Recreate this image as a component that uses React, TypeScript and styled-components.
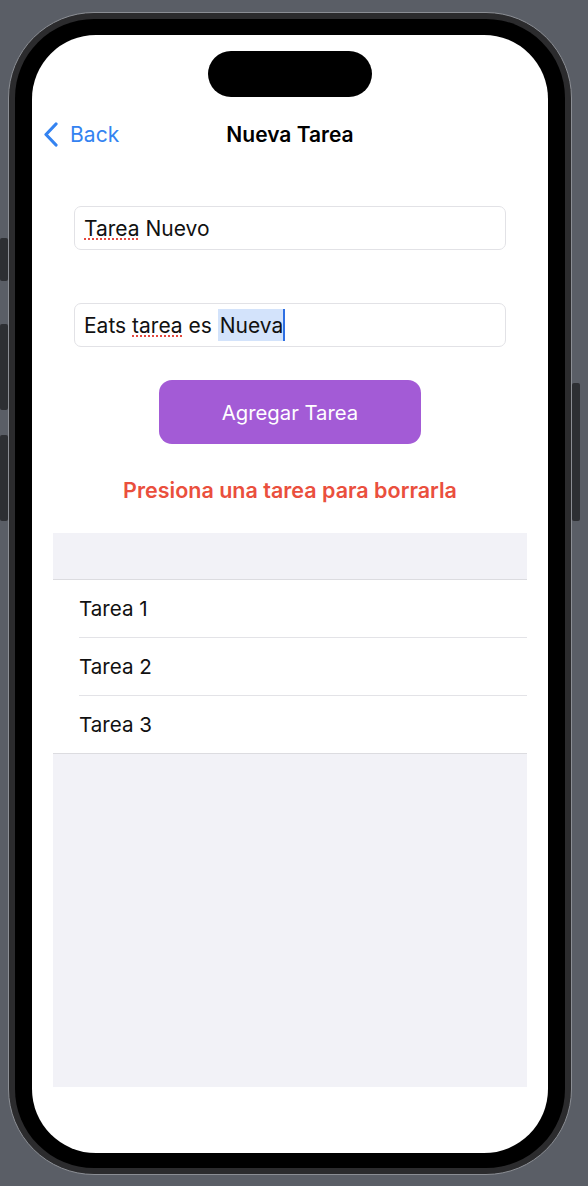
import React from "react";
import styled, { createGlobalStyle } from "styled-components";

const Global = createGlobalStyle`
  html, body { margin: 0; padding: 0; }
  body {
    background: #5a5e66;
    font-family: "Inter", "Noto Sans", sans-serif;
    -webkit-font-smoothing: antialiased;
  }
`;

const Stage = styled.div`
  width: 588px;
  height: 1186px;
  padding: 12px 0 0 8px;
  box-sizing: border-box;
`;

const Phone = styled.div`
  position: relative;
  width: 564px;
  box-sizing: border-box;
  border: 1px solid #8b8e94;
  border-radius: 86px;
  background: #2b2b2d;
  padding: 6px;
`;

const Bezel = styled.div`
  background: #000;
  border-radius: 79px;
  padding: 16px 17px 15px 17px;
`;

const SideButton = styled.div<{ $side: "left" | "right"; $top: number; $h: number }>`
  position: absolute;
  ${(p) => (p.$side === "left" ? "left: -9px;" : "right: -9px;")}
  top: ${(p) => p.$top}px;
  width: 8px;
  height: ${(p) => p.$h}px;
  background: #2d2f33;
  border-radius: 2px;
`;

const Screen = styled.div`
  background: #fff;
  height: 1118px;
  border-radius: 64px;
  overflow: hidden;
  display: flex;
  flex-direction: column;
  align-items: center;
  padding-top: 16px;
  box-sizing: border-box;
`;

const Island = styled.div`
  width: 164px;
  height: 46px;
  border-radius: 23px;
  background: #000;
  flex-shrink: 0;
`;

const NavBar = styled.div`
  margin-top: 15px;
  width: 100%;
  height: 44px;
  display: grid;
  grid-template-columns: 1fr auto 1fr;
  align-items: center;
`;

const BackButton = styled.div`
  display: flex;
  align-items: center;
  gap: 11px;
  padding-left: 11px;
  color: #3483f1;
  font-size: 21px;
  font-weight: 400;
  letter-spacing: 0.1px;
`;

const Title = styled.div`
  font-size: 21px;
  font-weight: 600;
  color: #000;
`;

const Form = styled.div`
  margin-top: 50px;
  width: 432px;
  display: flex;
  flex-direction: column;
`;

const Field = styled.div<{ $gap?: number }>`
  height: 44px;
  box-sizing: border-box;
  margin-top: ${(p) => p.$gap ?? 0}px;
  border: 1px solid #e2e2e6;
  border-radius: 7px;
  padding: 0 9px;
  display: flex;
  align-items: center;
  font-size: 21px;
  color: #111;
  white-space: pre;
`;

const Misspelled = styled.span`
  text-decoration: underline dotted #e5493f;
  text-decoration-thickness: 2px;
  text-underline-offset: 3px;
`;

const Selected = styled.span`
  background: #d3e3fb;
  height: 32px;
  display: inline-flex;
  align-items: center;
  padding-left: 2px;
`;

const Caret = styled.span`
  display: inline-block;
  width: 2px;
  height: 32px;
  background: #2e6fe3;
`;

const AddButton = styled.button`
  margin-top: 33px;
  width: 262px;
  height: 64px;
  border: none;
  border-radius: 13px;
  background: #a35bd6;
  color: #fff;
  font-family: inherit;
  font-size: 20.3px;
  font-weight: 400;
`;

const Hint = styled.div`
  margin-top: 34px;
  line-height: 24px;
  font-size: 21.5px;
  font-weight: 600;
  color: #ea4f3d;
`;

const List = styled.div`
  margin-top: 31px;
  width: 474px;
  height: 554px;
  background: #f2f2f7;
  display: flex;
  flex-direction: column;
`;

const ListHeader = styled.div`
  height: 46px;
  border-bottom: 1px solid #dcdce0;
`;

const Row = styled.div<{ $last?: boolean }>`
  background: #fff;
  padding-left: ${(p) => (p.$last ? 0 : 26)}px;
  ${(p) => (p.$last ? "border-bottom: 1px solid #dcdce0;" : "")}
`;

const RowInner = styled.div<{ $last?: boolean }>`
  height: 57px;
  display: flex;
  align-items: center;
  font-size: 20.6px;
  color: #111;
  padding-left: ${(p) => (p.$last ? 26 : 0)}px;
  ${(p) => (p.$last ? "" : "border-bottom: 1px solid #e3e3e7;")}
`;

const Chevron = () => (
  <svg width="16" height="25" viewBox="0 0 16 25" fill="none">
    <path d="M13 2 L3 12.5 L13 23" stroke="#3483f1" strokeWidth="3.2" strokeLinecap="round" strokeLinejoin="round" />
  </svg>
);

const tareas = ["Tarea 1", "Tarea 2", "Tarea 3"];

export default function App() {
  return (
    <Stage>
      <Global />
      <Phone>
        <SideButton $side="left" $top={225} $h={43} />
        <SideButton $side="left" $top={311} $h={86} />
        <SideButton $side="left" $top={422} $h={86} />
        <SideButton $side="right" $top={370} $h={138} />
        <Bezel>
          <Screen>
            <Island />
            <NavBar>
              <BackButton>
                <Chevron />
                Back
              </BackButton>
              <Title>Nueva Tarea</Title>
              <div />
            </NavBar>
            <Form>
              <Field>
                <Misspelled>Tarea</Misspelled> Nuevo
              </Field>
              <Field $gap={53}>
                Eats <Misspelled>tarea</Misspelled> es <Selected>Nueva</Selected>
                <Caret />
              </Field>
            </Form>
            <AddButton>Agregar Tarea</AddButton>
            <Hint>Presiona una tarea para borrarla</Hint>
            <List>
              <ListHeader />
              {tareas.map((t, i) => (
                <Row key={t} $last={i === tareas.length - 1}>
                  <RowInner $last={i === tareas.length - 1}>{t}</RowInner>
                </Row>
              ))}
            </List>
          </Screen>
        </Bezel>
      </Phone>
    </Stage>
  );
}
